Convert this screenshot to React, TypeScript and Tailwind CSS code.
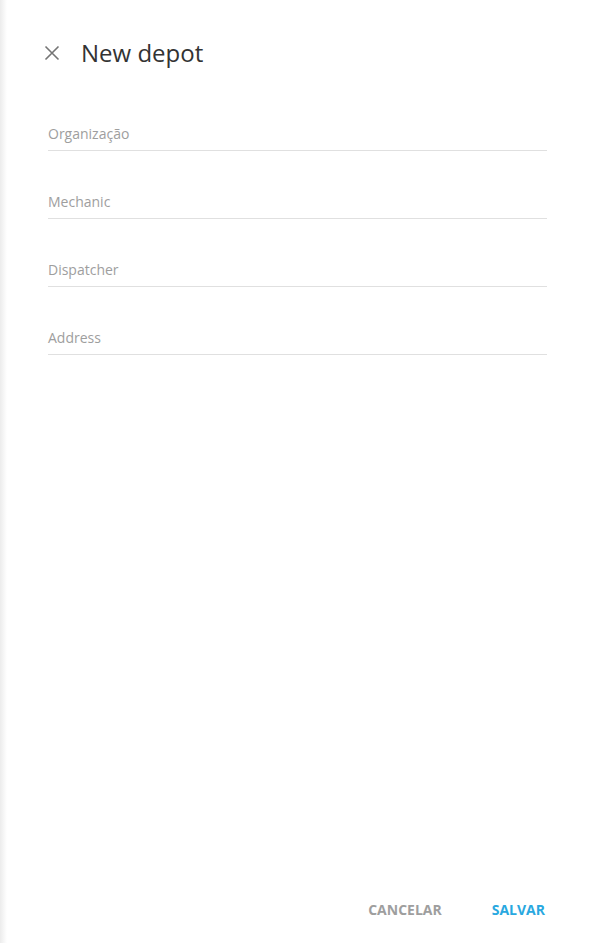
import type { ReactNode } from "react";

const fields = ["Organização", "Mechanic", "Dispatcher", "Address"];

function CloseIcon(): ReactNode {
  return (
    <svg width="16" height="16" viewBox="0 0 16 16" fill="none" stroke="#757575" strokeWidth="1.6">
      <path d="M1.5 1.5 L14.5 14.5 M14.5 1.5 L1.5 14.5" />
    </svg>
  );
}

export default function App(): ReactNode {
  return (
    <div className="flex h-[943px] w-[594px] bg-white font-['Open_Sans',sans-serif]">
      {/* drawer edge shadow */}
      <div className="w-[7px] bg-gradient-to-r from-[#ececec] to-white" />
      <div className="flex flex-1 flex-col">
        {/* Header */}
        <div className="flex h-[83px] items-start pt-[36px] pl-[37px]">
          <button type="button" className="mt-[9px] flex h-4 w-4 items-center justify-center">
            <CloseIcon />
          </button>
          <h1 className="ml-[21px] text-[24px] leading-[34px] text-[#333333]">New depot</h1>
        </div>

        {/* Fields */}
        <div className="flex flex-col pl-[41px] pr-[47px]">
          {fields.map((label) => (
            <div key={label} className="flex h-[68px] flex-col justify-end">
              <div className="border-b border-[#e0e0e0] pb-[6px] text-[14px] leading-[20px] text-[#9e9e9e]">
                {label}
              </div>
            </div>
          ))}
        </div>

        <div className="flex-1" />

        {/* Footer */}
        <div className="flex h-[44px] items-start justify-end gap-[50px] pr-[49px]">
          <button type="button" className="text-[14px] font-bold text-[#9e9e9e]">CANCELAR</button>
          <button type="button" className="text-[14px] font-bold text-[#29a8e0]">SALVAR</button>
        </div>
      </div>
    </div>
  );
}
